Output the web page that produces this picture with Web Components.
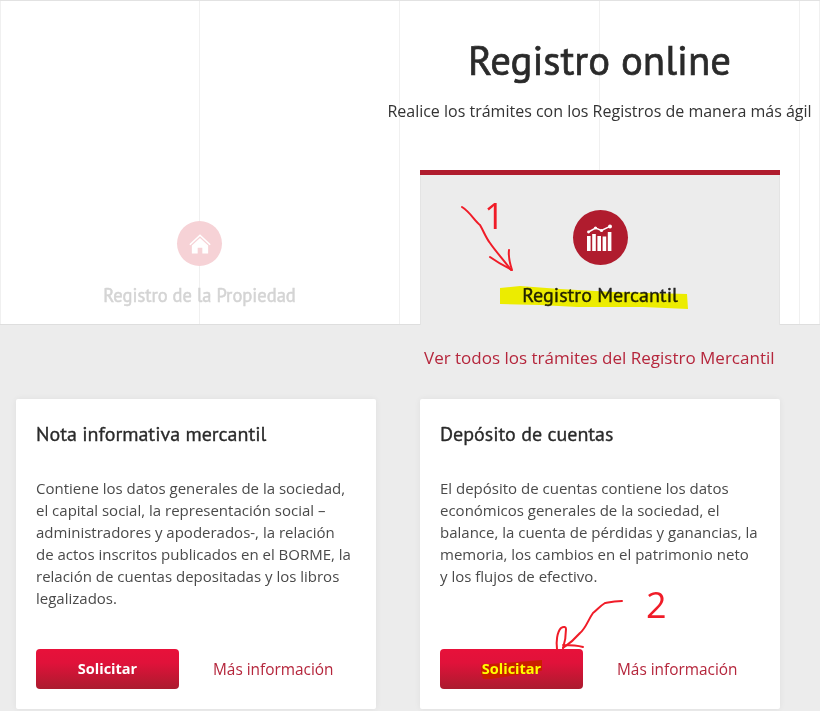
<!DOCTYPE html>
<html lang="es">
<head>
<meta charset="utf-8">
<title>Registro online</title>
<style>
  html, body { margin: 0; padding: 0; height: 711px; overflow: hidden; background: #ececec; }
</style>
</head>
<body>
<reg-page>
  <reg-hero title-text="Registro online" subtitle="Realice los trámites con los Registros de manera más ágil">
    <reg-tab slot="left" dim label="Registro de la Propiedad">
      <svg slot="icon" viewBox="0 0 28 28" width="24" height="24"><path d="M14 2.5 1.5 14.2l1.3 1.3L14 5l11.2 10.5 1.3-1.3z" fill="#fff"/><path d="M14 7 4.5 15.8V25h6.8v-6.5h5.4V25h6.8v-9.2z" fill="#fff"/></svg>
    </reg-tab>
    <reg-tab slot="right" active label="Registro Mercantil">
      <svg slot="icon" viewBox="0 0 28 28" width="28" height="28">
        <g fill="#fff"><rect x="1" y="12" width="3.6" height="15"/><rect x="6.2" y="10" width="3.6" height="17"/><rect x="11.4" y="12" width="3.6" height="15"/><rect x="16.6" y="12.5" width="3.6" height="14.5"/><rect x="21.8" y="8" width="3.6" height="19"/>
        <circle cx="2.5" cy="8" r="1.4"/><circle cx="9.5" cy="4" r="1.6"/><circle cx="15.5" cy="6.5" r="1.6"/><circle cx="24" cy="2.4" r="2"/></g>
        <path d="M2.5 8 9.5 4l6 2.5L24 2.4" fill="none" stroke="#fff" stroke-width="1.5"/>
      </svg>
    </reg-tab>
  </reg-hero>
  <reg-all-link>Ver todos los trámites del Registro Mercantil</reg-all-link>
  <reg-cards>
    <reg-card heading="Nota informativa mercantil">
      Contiene los datos generales de la sociedad,<br>el capital social, la representación social –<br>administradores y apoderados-, la relación<br>de actos inscritos publicados en el BORME, la<br>relación de cuentas depositadas y los libros<br>legalizados.
      <reg-button slot="actions">Solicitar</reg-button>
    </reg-card>
    <reg-card heading="Depósito de cuentas">
      El depósito de cuentas contiene los datos<br>económicos generales de la sociedad, el<br>balance, la cuenta de pérdidas y ganancias, la<br>memoria, los cambios en el patrimonio neto<br>y los flujos de efectivo.
      <reg-button slot="actions" marked>Solicitar</reg-button>
    </reg-card>
  </reg-cards>
  <reg-notes></reg-notes>
</reg-page>

<script>
class RegPage extends HTMLElement {
  constructor() {
    super();
    this.attachShadow({ mode: "open" }).innerHTML = `
      <style>
        :host { display: flex; flex-direction: column; position: relative; width: 820px; height: 711px;
          overflow: hidden; background: #ececec; font-family: "Open Sans", sans-serif; }
      </style>
      <slot></slot>`;
  }
}

class RegHero extends HTMLElement {
  connectedCallback() {
    this.attachShadow({ mode: "open" }).innerHTML = `
      <style>
        :host { display: block; box-sizing: border-box; height: 325px; background-color: #fff;
          border-top: 1px solid #e2e2e2; border-bottom: 1px solid #dedede;
          background-image: linear-gradient(#f0f0f0, #f0f0f0),
            repeating-linear-gradient(to right, #f0f0f0 0, #f0f0f0 1px, transparent 1px, transparent 200px);
          background-size: 1px 100%, auto; background-repeat: no-repeat, repeat;
          background-position: 0 0, -1px 0; }
        .grid { display: grid; grid-template-columns: 399px 401px; height: 100%; }
        .right { display: flex; flex-direction: column; align-items: center; }
        .left { display: flex; flex-direction: column; justify-content: flex-end; }
        h1 { margin: 33px 0 0; font: 400 40.8px/52px "PT Sans", "Noto Sans", sans-serif; -webkit-text-stroke: .7px #2a2a2a;
          color: #2a2a2a; white-space: nowrap; }
        p { margin: 13px 0 0; font: 400 16px/24px "Open Sans", sans-serif; color: #333; white-space: nowrap; }
        .tab-slot { margin: 47px 0 0 1px; flex: 1; display: flex; width: 360px; }
        .tab-slot ::slotted(reg-tab) { flex: 1; }
      </style>
      <div class="grid">
        <div class="left"><slot name="left"></slot></div>
        <div class="right">
          <h1>${this.getAttribute("title-text")}</h1>
          <p>${this.getAttribute("subtitle")}</p>
          <div class="tab-slot"><slot name="right"></slot></div>
        </div>
      </div>`;
  }
}

class RegTab extends HTMLElement {
  connectedCallback() {
    this.attachShadow({ mode: "open" }).innerHTML = `
      <style>
        :host { display: flex; flex-direction: column; align-items: center; box-sizing: border-box; }
        :host([active]) { background: #ececec; border-top: 5px solid #b01c2e; margin-bottom: -1px; padding-top: 35px;
          box-shadow: inset 1px 0 #e4e4e4, inset -1px 0 #e4e4e4; }
        :host([dim]) { padding-bottom: 17px; }
        .dot { width: 55px; height: 55px; border-radius: 50%; background: #b01c2e; display: flex; align-items: center; justify-content: center; }
        :host([dim]) .dot { width: 45px; height: 45px; background: #f6d2d6; }
        .label { margin-top: 18px; font: 400 20px/24px "PT Sans", "Noto Sans", sans-serif; -webkit-text-stroke: .4px #222; color: #222; white-space: nowrap; }
        :host([dim]) .label { margin-top: 17px; font-size: 18.5px; color: #d4d4d4; -webkit-text-stroke: .5px #d4d4d4; }
      </style>
      <div class="dot"><slot name="icon"></slot></div>
      <div class="label">${this.getAttribute("label")}</div>`;
  }
}

class RegAllLink extends HTMLElement {
  constructor() {
    super();
    this.attachShadow({ mode: "open" }).innerHTML = `
      <style>
        :host { display: block; box-sizing: border-box; height: 74px; padding: 21px 0 0 424px;
          font: 400 17px/24px "Open Sans", sans-serif; color: #b5263c; white-space: nowrap; }
      </style>
      <slot></slot>`;
  }
}

class RegCards extends HTMLElement {
  constructor() {
    super();
    this.attachShadow({ mode: "open" }).innerHTML = `
      <style>
        :host { display: flex; gap: 44px; padding-left: 15.5px; }
      </style>
      <slot></slot>`;
  }
}

class RegCard extends HTMLElement {
  connectedCallback() {
    this.attachShadow({ mode: "open" }).innerHTML = `
      <style>
        :host { display: flex; flex-direction: column; box-sizing: border-box; width: 360px; height: 310px;
          padding: 21px 20.5px 20px; background: #fff; border-radius: 2px; box-shadow: 0 0 6px rgba(0,0,0,.06); }
        h2 { margin: 0; font: 400 20px/28px "PT Sans", "Noto Sans", sans-serif; -webkit-text-stroke: .35px #2a2a2a; color: #2a2a2a; white-space: nowrap; }
        .body { margin-top: 29px; font: 400 15px/22px "Open Sans", sans-serif; color: #4a4a4a; white-space: nowrap; flex: 1; }
        .actions { display: flex; align-items: center; gap: 34px; }
        a { margin-top: 2px; font: 400 15.4px/22px "Open Sans", sans-serif; color: #b5263c; text-decoration: none; }
      </style>
      <h2>${this.getAttribute("heading")}</h2>
      <div class="body"><slot></slot></div>
      <div class="actions"><slot name="actions"></slot><a href="#">Más información</a></div>`;
  }
}

class RegButton extends HTMLElement {
  constructor() {
    super();
    this.attachShadow({ mode: "open" }).innerHTML = `
      <style>
        :host { display: flex; align-items: center; justify-content: center; width: 143px; height: 40px;
          border-radius: 4px; background: linear-gradient(#e8113a, #e0123a 35%, #ab1b2e);
          font: 700 14.5px/20px "Open Sans", sans-serif; color: #fff; }
        .txt { position: relative; }
        :host([marked]) .txt { color: #ffff00; }
        :host([marked]) .txt::before { content: ""; position: absolute; left: -1px; right: -1px; top: 1px; bottom: -1px;
          z-index: -1; background: #c91f00; clip-path: polygon(0 25%, 100% 0, 100% 55%, 55% 80%, 5% 105%, 0 70%); }
        .wrap { isolation: isolate; }
      </style>
      <div class="wrap"><span class="txt"><slot></slot></span></div>`;
  }
}

// marks somebody drew over the screenshot: they lie over the page at their own coordinates
class RegNotes extends HTMLElement {
  constructor() {
    super();
    this.attachShadow({ mode: "open" }).innerHTML = `
      <style>
        :host { position: absolute; inset: 0; pointer-events: none; }
        svg { position: absolute; left: 0; top: 0; }
        .hl { mix-blend-mode: multiply; }
        span { position: absolute; font: 400 36px/40px "Open Sans", sans-serif; color: #f01c28; }
      </style>
      <svg class="hl" width="820" height="711">
        <path d="M500 288 L520 286 L560 289 L613 292 L687 294 L688 309 L643 307 L577 307 L540 305 L500 304 Z" fill="#ffff00"/>
      </svg>
      <svg width="820" height="711" fill="none" stroke="#f01c28" stroke-width="2" stroke-linecap="round" stroke-linejoin="round">
        <path d="M462 207C470 212 474 220 480 225C484 232 486 238 490 243C496 252 504 260 511 270"/>
        <path d="M490 257C497 262 504 266 512 270C510 264 508 258 509 250"/>
        <path d="M622 601C614 601 610 602 605 603C600 606 597 610 593 613C588 620 586 628 580 633C574 640 569 644 563 648"/>
        <path d="M583 647C576 645 570 645 563 645M557 649C556 642 557 632 561 628C564 626 566 627 566 629C566 636 565 642 563 648"/>
      </svg>
      <span style="left:484px;top:196px">1</span>
      <span style="left:646px;top:585px">2</span>`;
  }
}

customElements.define("reg-page", RegPage);
customElements.define("reg-hero", RegHero);
customElements.define("reg-tab", RegTab);
customElements.define("reg-all-link", RegAllLink);
customElements.define("reg-cards", RegCards);
customElements.define("reg-card", RegCard);
customElements.define("reg-button", RegButton);
customElements.define("reg-notes", RegNotes);
</script>
</body>
</html>
